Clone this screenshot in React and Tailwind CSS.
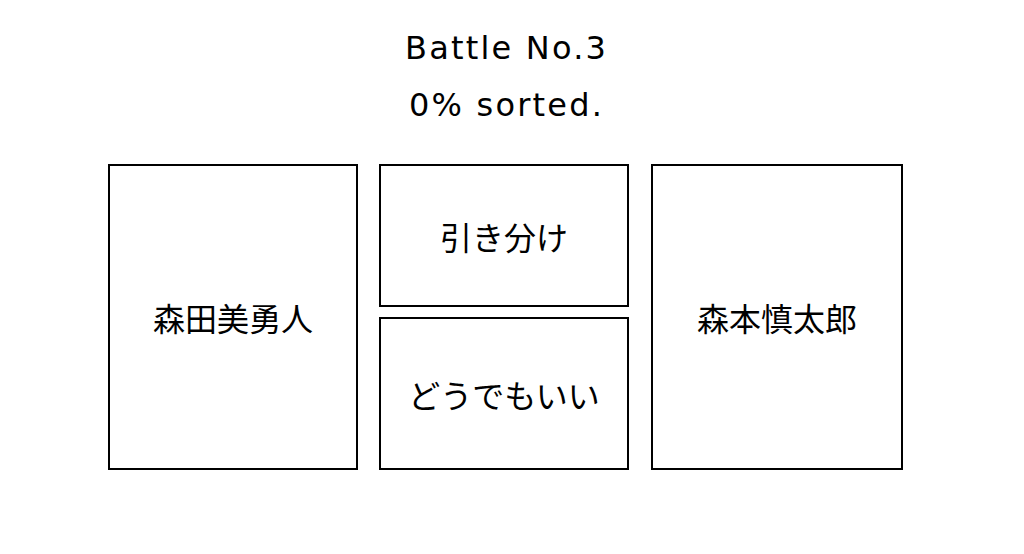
import React from 'react'

const font = { fontFamily: '"Noto Sans CJK JP", "Noto Sans", sans-serif' }
const latin = { fontFamily: '"DejaVu Sans", "Noto Sans CJK JP", sans-serif' }

const Choice = ({ label, className }) => (
  <div className={`flex items-center justify-center border-2 border-black text-[32px] text-black ${className}`}>
    {label}
  </div>
)

export default function App() {
  return (
    <div className="w-[1024px] h-[554px] bg-white overflow-hidden" style={font}>
      <div className="ml-[108px] w-[795px] pt-[20px]">
        <div className="text-center text-[32px] leading-[57px] tracking-[2.2px] text-black" style={latin}>
          <div className="pl-[2.2px]">Battle No.3</div>
          <div className="pl-[2.2px]">0% sorted.</div>
        </div>
        <div className="mt-[30px] flex">
          <Choice label="森田美勇人" className="w-[250px] h-[306px]" />
          <div className="ml-[21px] flex w-[250px] flex-col gap-[10px]">
            <Choice label="引き分け" className="h-[143px]" />
            <Choice label="どうでもいい" className="h-[153px]" />
          </div>
          <Choice label="森本慎太郎" className="ml-[22px] w-[252px] h-[306px]" />
        </div>
      </div>
    </div>
  )
}
